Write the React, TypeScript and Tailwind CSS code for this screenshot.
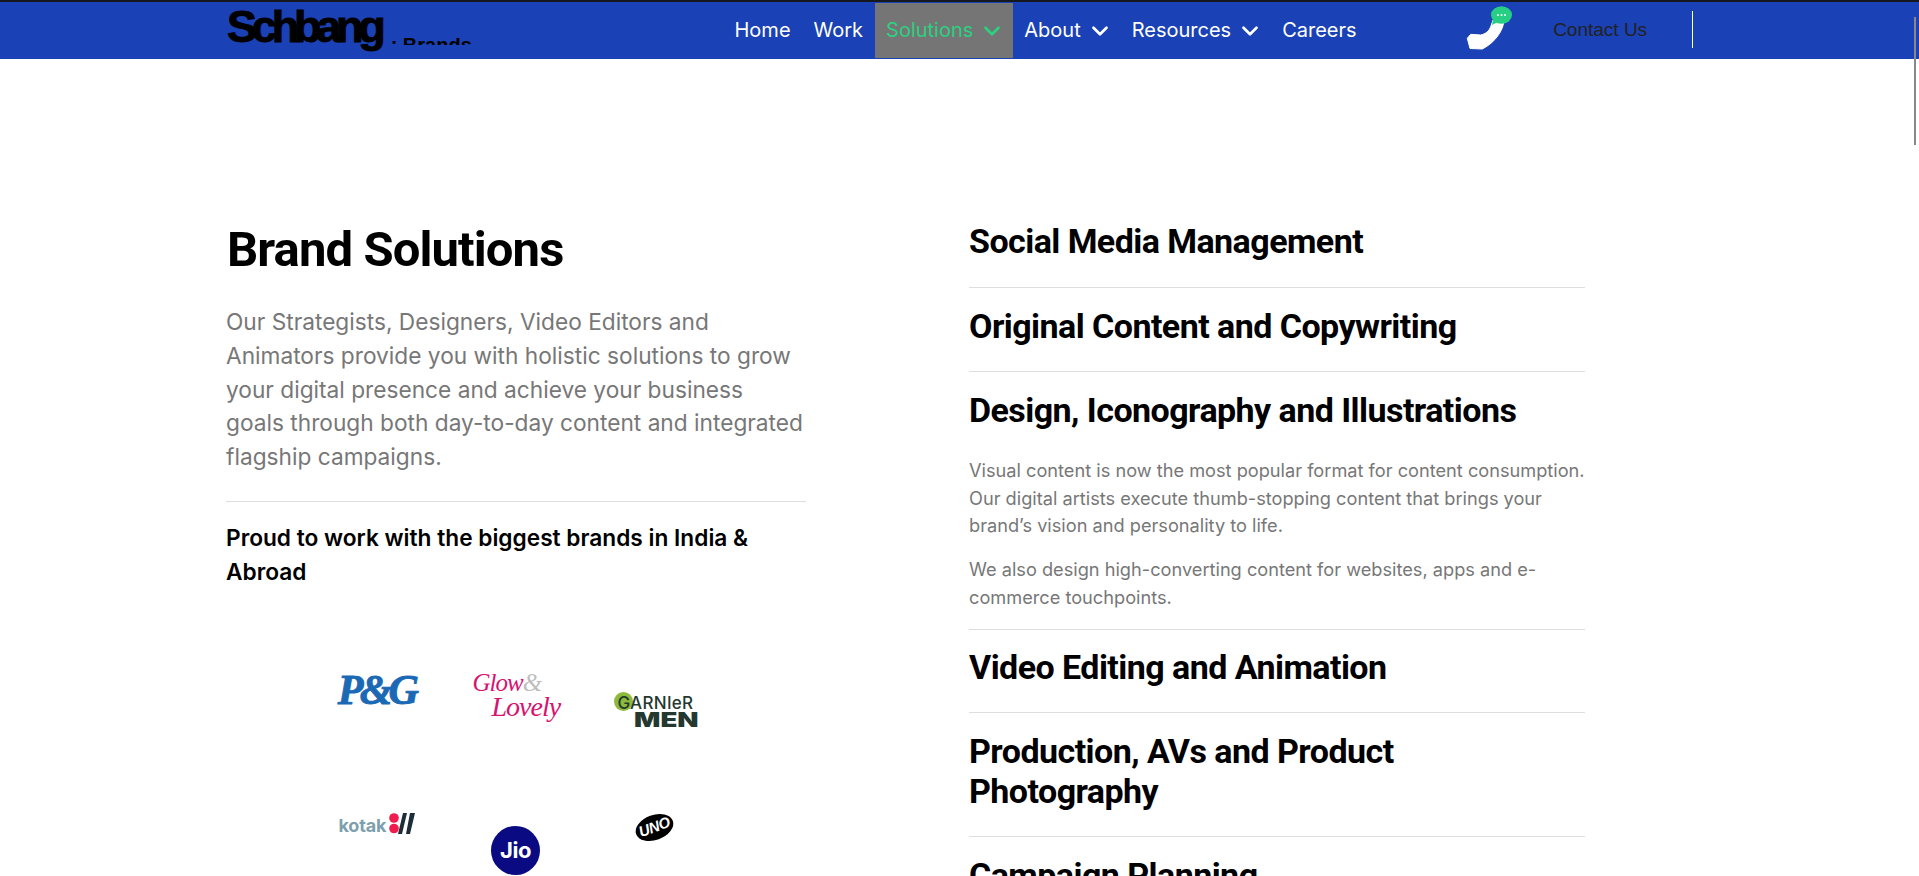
import type { ReactNode } from "react";
import { ChevronDown } from "lucide-react";

const inter = "font-['Inter',sans-serif]";
const head = "font-['Roboto',sans-serif] font-bold";

function NavLink({ label, chevron, active }: { label: string; chevron?: boolean; active?: boolean }) {
  return (
    <div className={`flex items-center gap-[11px] h-[55px] px-[11.5px] text-[20px] ${active ? "bg-[#757575] text-[#2bd180]" : "text-white"}`}>
      <span className="-mt-px">{label}</span>
      {chevron && (
        <span className="-ml-[5px] -mr-[4px] flex">
          <ChevronDown size={26} strokeWidth={2.5} />
        </span>
      )}
    </div>
  );
}

function PhoneIcon() {
  return (
    <svg width="46" height="44" viewBox="0 0 46 44">
      <path
        d="M4.7 28.3 L14.7 29 C19 28 23 25.7 25 20 L27 14 L38 15 C37 24 30 36 16.3 43 L4 42.5 L1.3 32.3 Z"
        fill="#fff"
        stroke="#fff"
        strokeLinejoin="round"
      />
      <ellipse cx="35.5" cy="9" rx="10.5" ry="8.7" fill="#27cf84" />
      <path d="M27 13 L26 19 L32 16 Z" fill="#27cf84" />
      <circle cx="32" cy="9" r="1" fill="#fff" />
      <circle cx="35.5" cy="9" r="1" fill="#fff" />
      <circle cx="39" cy="9" r="1" fill="#fff" />
    </svg>
  );
}

function Heading({ children }: { children: ReactNode }) {
  return <h3 className={`${head} text-[34px] leading-[40px] tracking-[-0.55px] text-black`}>{children}</h3>;
}

function PG() {
  return (
    <div className="w-[84px] h-[40px] flex items-center justify-center">
      <span className="font-['Liberation_Serif',serif] font-bold italic text-[#1b69b5] text-[42px] tracking-[-3.8px] leading-none [-webkit-text-stroke:1px_#1b69b5]">P&amp;G</span>
    </div>
  );
}

function Glow() {
  return (
    <div className="w-[86px] h-[54px] relative font-['Liberation_Serif',serif] italic text-[#d6136f] leading-none">
      <span className="absolute left-0 top-0 text-[25px] tracking-[-1px]">Glow<span className="text-[#bdbdbd]">&amp;</span></span>
      <span className="absolute left-[19px] top-[23px] text-[28px] tracking-[-1px]">Lovely</span>
    </div>
  );
}

function Garnier() {
  return (
    <div className="w-[82px] h-[36px] relative text-[#25382f] font-['Inter',sans-serif] leading-none">
      <div className="absolute left-0 top-0 w-[19px] h-[19px] rounded-full bg-[#8cbb3c]" />
      <span className="absolute left-[4px] top-[3px] text-[17px] tracking-[0.3px] font-medium">GARNIeR</span>
      <span className="absolute left-[20px] top-[18px] text-[20px] font-black origin-left scale-x-[1.38]">MEN</span>
    </div>
  );
}

function Kotak() {
  return (
    <div className="w-[76px] h-[22px] flex items-center gap-[3px] font-['Inter',sans-serif] leading-none">
      <span className="text-[#7e9fae] font-bold text-[18px] tracking-[-0.2px] mt-[5px]">kotak</span>
      <svg width="26" height="21" viewBox="0 0 26 21" className="shrink-0">
        <circle cx="5" cy="5" r="4.8" fill="#ef1c4f" />
        <circle cx="5" cy="15.5" r="4.8" fill="#ef1c4f" />
        <path d="M14 0h4l-5 21H9z M21 0h5l-5 21h-4z" fill="#1e2e38" />
      </svg>
    </div>
  );
}

function Jio() {
  return (
    <div className="w-[49px] h-[49px] rounded-full bg-[#0a0a82] flex items-center justify-center text-white font-['Inter',sans-serif] font-bold text-[22px] tracking-[-0.5px]">
      Jio
    </div>
  );
}

function Uno() {
  return (
    <div className="w-[39px] h-[25px] bg-black rounded-[50%] -rotate-[20deg] flex items-center justify-center text-white font-['Liberation_Sans',sans-serif] font-bold italic text-[15px] tracking-[-0.5px]">
      UNO
    </div>
  );
}

const row = "pt-[18px] pb-[25px] border-b border-[#dedede]";

export default function App() {
  return (
    <div className={`h-[876px] w-full overflow-hidden bg-white relative ${inter}`}>
      <div className="absolute right-[3px] top-[17px] w-[2px] h-[128px] bg-[#888888] z-10" />
      <header className="h-[59px] bg-[#1a41b5] border-t-2 border-[#16181f] flex items-start pl-[227px]">
        <div className="w-[496px] h-[55px] flex items-start text-black font-['Liberation_Sans',sans-serif] font-bold">
          <span className="mt-[2px] text-[45px] leading-[45px] tracking-[-5.2px] [-webkit-text-stroke:1px_#000]">Schbang</span>
          <div className="ml-[10px] mt-[36px] h-[7px] overflow-hidden">
            <div className="-mt-[3px] text-[20px] leading-[20px] whitespace-nowrap">: Brands</div>
          </div>
        </div>
        <nav className="flex items-center h-[55px] mt-px">
          <NavLink label="Home" />
          <NavLink label="Work" />
          <NavLink label="Solutions" chevron active />
          <NavLink label="About" chevron />
          <NavLink label="Resources" chevron />
          <NavLink label="Careers" />
        </nav>
        <div className="flex items-center ml-[98px] mt-[4px] h-[44px]">
          <PhoneIcon />
          <span className="ml-[41px] mt-[4px] text-[#222] text-[19px] font-['Liberation_Sans',sans-serif]">Contact Us</span>
          <div className="ml-[45px] mt-[3px] w-px h-[37px] bg-white" />
        </div>
      </header>
      <main className="flex pl-[226px] pt-[162px]">
        <section className="w-[580px]">
          <h1 className={`${head} mt-[2px] text-[49px] leading-[54px] tracking-[-0.9px] text-black ml-[1px]`}>Brand Solutions</h1>
          <p className="mt-[28px] w-[600px] text-[22.7px] leading-[33.8px] text-[#777]">
            Our Strategists, Designers, Video Editors and<br />
            Animators provide you with holistic solutions to grow<br />
            your digital presence and achieve your business<br />
            goals through both day-to-day content and integrated<br />
            flagship campaigns.
          </p>
          <div className="mt-[27px] h-px bg-[#dedede]" />
          <p className="mt-[19px] text-[22.7px] leading-[34px] font-semibold text-black">Proud to work with the biggest brands in India &amp; Abroad</p>
          <div className="mt-[81px] ml-[81px] grid grid-cols-[139px_139px_139px] grid-rows-[143px_auto]">
            <div className="flex justify-center items-start"><PG /></div>
            <div className="flex justify-center items-start"><Glow /></div>
            <div className="flex justify-center items-start pt-[22px]"><Garnier /></div>
            <div className="flex justify-center items-start"><Kotak /></div>
            <div className="flex justify-center items-start pt-[13px]"><Jio /></div>
            <div className="flex justify-center items-start pt-[2px]"><Uno /></div>
          </div>
        </section>
        <section className="w-[616px] ml-[163px]">
          <div className="pb-[26px] border-b border-[#dedede]"><Heading>Social Media Management</Heading></div>
          <div className={row}><Heading>Original Content and Copywriting</Heading></div>
          <div className="pt-[18px] pb-[18px] border-b border-[#dedede]">
            <Heading>Design, Iconography and Illustrations</Heading>
            <p className="mt-[27px] text-[18.2px] leading-[27.5px] text-[#777]">
              Visual content is now the most popular format for content consumption. Our digital artists execute thumb-stopping content that brings your brand’s vision and personality to life.
            </p>
            <p className="mt-[16.5px] text-[18.2px] leading-[27.5px] text-[#777]">
              We also design high-converting content for websites, apps and e-commerce touchpoints.
            </p>
          </div>
          <div className="pt-[17px] pb-[25px] border-b border-[#dedede]"><Heading>Video Editing and Animation</Heading></div>
          <div className={row}><Heading>Production, AVs and Product Photography</Heading></div>
          <div className="pt-[18px]"><Heading>Campaign Planning</Heading></div>
        </section>
      </main>
    </div>
  );
}
